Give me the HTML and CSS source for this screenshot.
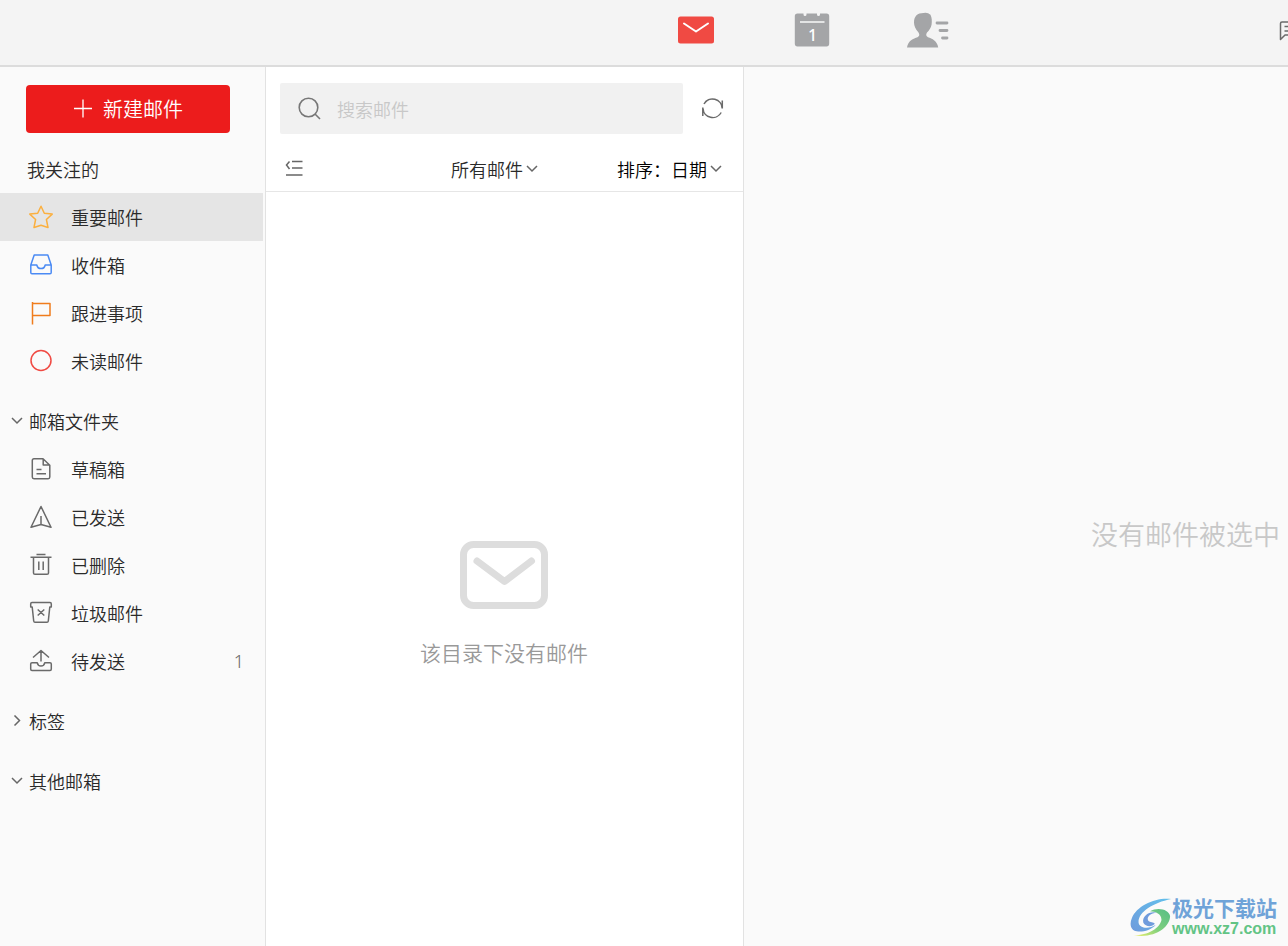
FILE: index.html
```html
<!DOCTYPE html>
<html lang="zh-CN">
<head>
<meta charset="utf-8">
<meta name="viewport" content="width=device-width, initial-scale=1">
<title>邮箱</title>
<link rel="stylesheet" href="styles.css">
</head>
<body>
<header class="topbar">
  <nav class="tabs" aria-label="应用">
    <button class="tab" type="button" aria-label="邮件">
      <svg width="36" height="36" viewBox="0 0 36 36"><rect y="4.500" width="36" height="27" rx="2.500" fill="#f04a43"/><path d="M6 11.500 18 19.500 30 11.500" fill="none" stroke="#fff" stroke-width="2" stroke-linecap="round" stroke-linejoin="round"/></svg>
    </button>
    <button class="tab" type="button" aria-label="日历">
      <svg width="36" height="36" viewBox="0 0 36 36"><path d="M3.500 1.500H9.500V2.500A1.500 1.500 0 0 0 12.500 2.500V1.500H23V2.500A1.500 1.500 0 0 0 26 2.500V1.500H32.500Q35.200 1.500 35.200 4.200V31.500Q35.200 34.400 32.500 34.400H3.500Q.8 34.400 .8 31.500V4.200Q.8 1.500 3.500 1.500Z" fill="#a4a5a7"/><path d="M6 10H30.500" stroke="#f4f4f4" stroke-width="1.600"/><text class="tab-day" x="18.500" y="29" text-anchor="middle">1</text></svg>
    </button>
    <button class="tab" type="button" aria-label="通讯录">
      <svg width="42" height="36" viewBox="0 0 42 36"><path d="M0 35.500C1 28.500 6.500 26.500 10.500 25.200Q13.500 23.500 11.500 20.500C8.500 17 7 14 7 10.500C7 4 10.500 1 16.500 1Q20.500 0 23.500 2.800C25 6 25 9 24.600 12.500C24 16 22 18.500 20 20.500Q18 23.500 21 25.200C25 26.500 30.500 29 31.200 35.500Z" fill="#a4a5a7"/><g stroke="#a4a5a7" stroke-width="2.800" stroke-linecap="round"><path d="M30 11H40M33 18.500H40M35.500 26H40"/></g></svg>
    </button>
  </nav>
  <button class="feedback" type="button" aria-label="反馈">
    <svg width="22" height="22" viewBox="0 0 22 22" fill="none" stroke="#6a6a6a" stroke-width="1.500" stroke-linejoin="round"><path d="M1.500 20.500V4.500Q1.500 3 3 3H19Q20.500 3 20.500 4.500V16H6Z"/><path d="M5.500 7.500H16M5.500 12H13"/></svg>
  </button>
</header>

<div class="workspace">
  <aside class="sidebar">
    <button class="compose" type="button">
      <svg width="20" height="20" viewBox="0 0 20 20"><path d="M1 9.500H19M10 .5V18.500" stroke="#fff" stroke-width="1.300"/></svg>
      新建邮件
    </button>
    <h2 class="group group-plain">我关注的</h2>
    <ul class="folders">
      <li><a class="folder folder-active" href="#starred"><svg class="icon icon-star" viewBox="0 0 24 24"><path d="M12 1.200 15.300 8.200 23.200 9.100 17.400 14.500 19 22.500 12 20.200 5 22.500 6.600 14.500 .8 9.100 8.700 8.200Z"/></svg>重要邮件</a></li>
      <li><a class="folder" href="#inbox"><svg class="icon icon-inbox" viewBox="0 0 24 24"><path d="M5.200 2H18.800L22.200 12V19.500Q22.200 20.800 21 20.800H3Q1.800 20.800 1.800 19.500V12ZM1.800 12H7.800Q8.500 15.600 12 15.600T16.200 12H22.200"/></svg>收件箱</a></li>
      <li><a class="folder" href="#todo"><svg class="icon icon-flag" viewBox="0 0 24 24"><path d="M3.500 1V23.500M3.500 2.500H21V14.500H3.500"/></svg>跟进事项</a></li>
      <li><a class="folder" href="#unread"><svg class="icon icon-unread" viewBox="0 0 24 24"><circle cx="12" cy="11.500" r="10"/></svg>未读邮件</a></li>
    </ul>
    <h2 class="group"><button class="toggle" type="button" aria-expanded="true"><svg class="chevron" viewBox="0 0 12 12"><path d="M1 3 6 8 11 3"/></svg>邮箱文件夹</button></h2>
    <ul class="folders">
      <li><a class="folder" href="#drafts"><svg class="icon" viewBox="0 0 24 24"><path d="M14 1.800H5Q3.300 1.800 3.300 3.500V20Q3.300 21.700 5 21.700H19.200Q20.800 21.700 20.800 20V8.200ZM14.200 2V8H20.600M7.500 12.500H12.500M7.500 16.700H17"/></svg>草稿箱</a></li>
      <li><a class="folder" href="#sent"><svg class="icon" viewBox="0 0 24 24"><path d="M12 1.500 22 22.300 12 19.500 2 22.300ZM12 11V19.500"/></svg>已发送</a></li>
      <li><a class="folder" href="#trash"><svg class="icon" viewBox="0 0 24 24"><path d="M7.500 1.500H16.500M1.500 4.300H22.500M4.500 4.300V20Q4.500 21.300 6 21.300H18Q19.500 21.300 19.500 20V4.300M9.800 8.500V17M14.200 8.500V17"/></svg>已删除</a></li>
      <li><a class="folder" href="#spam"><svg class="icon" viewBox="0 0 24 24"><path d="M3 1.500H21Q22.300 1.500 22.300 3V6H20.800L19.300 20Q19.100 21.300 18 21.300H6Q4.900 21.300 4.700 20L3.200 6H1.700V3Q1.700 1.500 3 1.500ZM8.700 8.500 15.300 14.500M15.300 8.500 8.700 14.500"/></svg>垃圾邮件</a></li>
      <li><a class="folder" href="#outbox"><svg class="icon" viewBox="0 0 24 24"><path d="M4 8.500 12 1.500 20 8.500M12 1.500V12.500M3 13.700H8.200Q8.800 17 12 17T15.800 13.700H21Q22.300 13.700 22.300 15V20Q22.300 21.500 21 21.500H3Q1.700 21.500 1.700 20V15Q1.700 13.700 3 13.700Z"/></svg>待发送<span class="count">1</span></a></li>
    </ul>
    <h2 class="group"><button class="toggle" type="button" aria-expanded="false"><svg class="chevron" viewBox="0 0 12 12"><path d="M3.500 .5 8.500 5.500 3.500 10.500"/></svg>标签</button></h2>
    <h2 class="group"><button class="toggle" type="button" aria-expanded="true"><svg class="chevron" viewBox="0 0 12 12"><path d="M1 3 6 8 11 3"/></svg>其他邮箱</button></h2>
  </aside>

  <main class="list">
    <div class="search-row">
      <label class="search">
        <svg width="24" height="24" viewBox="0 0 24 24" fill="none" stroke="#777" stroke-width="1.600"><circle cx="10.500" cy="10.500" r="9.300"/><path d="M17 17 22 22"/></svg>
        <input class="search-input" type="search" placeholder="搜索邮件" aria-label="搜索邮件">
      </label>
      <button class="refresh" type="button" aria-label="刷新">
        <svg width="24" height="24" viewBox="0 0 24 24" fill="none" stroke="#6a6a6a" stroke-width="1.500"><path d="M3 7A9.700 9.700 0 0 1 21.200 11.500M21.300 3.500V11.500M20.200 15.500A9.700 9.700 0 0 1 2 11.500M1.800 19V10.500"/></svg>
      </button>
    </div>
    <div class="toolbar">
      <button class="collapse" type="button" aria-label="收起">
        <svg width="20" height="20" viewBox="0 0 20 20" fill="none" stroke="#666" stroke-width="1.500"><path d="M8 2.500H18.500M8 9H18.500M2 16H18.500M5.500 2.500 2.500 6 5.500 10"/></svg>
      </button>
      <label class="picker picker-filter">
        <select class="picker-select" aria-label="筛选"><option>所有邮件</option></select>
        <svg class="chevron" viewBox="0 0 12 12"><path d="M1 3 6 8 11 3"/></svg>
      </label>
      <label class="picker picker-sort">排序：
        <select class="picker-select"><option>日期</option></select>
        <svg class="chevron" viewBox="0 0 12 12"><path d="M1 3 6 8 11 3"/></svg>
      </label>
    </div>
    <div class="empty">
      <svg width="88" height="68" viewBox="0 0 88 68" fill="none" stroke="#ddd"><rect x="3.500" y="3.500" width="81" height="61" rx="10" stroke-width="7"/><path d="M17 20 44.500 40.500 71.500 20" stroke-width="7" stroke-linecap="round" stroke-linejoin="round"/></svg>
      <p class="empty-text">该目录下没有邮件</p>
    </div>
  </main>

  <section class="reader">
    <p class="reader-text">没有邮件被选中</p>
  </section>
</div>

<div class="watermark">
  <svg width="42" height="42" viewBox="0 0 44 42">
    <defs>
      <linearGradient id="wave" x1="1" y1="0" x2="0" y2="1"><stop offset="0" stop-color="#62c0ec"/><stop offset="1" stop-color="#6f9bdc"/></linearGradient>
      <linearGradient id="leaf" x1="1" y1="0" x2="0" y2="1"><stop offset="0" stop-color="#55bd86"/><stop offset=".55" stop-color="#80d07e"/><stop offset="1" stop-color="#eef06c"/></linearGradient>
    </defs>
    <path d="M43 1C27-1 7 8 2 21C-1 28 1 34 7 35C13 36 22 34 27 28C20 33 10 32 9 26C8 15 24 5 43 1Z" fill="url(#wave)"/>
    <path d="M14 26C12 19 21 13 28 15.500C22 15.500 17 20 19 23.500C21 26 25 25 26 27C23 31 16 30 14 26Z" fill="#6f9bdc"/>
    <path d="M21 14C29 9 41 12 42 19C42 31 25 43 4 39C19 39 31 32 33 23C33 17 27 14 21 14Z" fill="url(#leaf)"/>
  </svg>
  <div class="watermark-text">
    <span class="watermark-name">极光下载站</span>
    <span class="watermark-url">www.xz7.com</span>
  </div>
</div>
</body>
</html>
```
FILE: styles.css
```css
* {
  box-sizing: border-box;
}

body {
  margin: 0;
  min-height: 100vh;
  display: flex;
  flex-direction: column;
  position: relative;
  overflow-x: hidden;
  background: #fafafa;
  color: #2a2a2a;
  font-family: "Noto Sans CJK SC", "Liberation Sans", sans-serif;
  font-size: 18px;
  font-weight: 350;
  line-height: 24px;
}

button,
input,
select {
  margin: 0;
  padding: 0;
  border: 0;
  background: none;
  color: inherit;
  font: inherit;
}

p,
h2,
ul {
  margin: 0;
  padding: 0;
}

svg {
  display: block;
  flex: none;
}

/* Top bar */
.topbar {
  display: flex;
  justify-content: space-between;
  height: 67px;
  padding: 0 0 6px 638px;
  overflow: hidden;
  background: #f4f4f4;
  border-bottom: 2px solid #dcdcdc;
}

.tabs {
  display: flex;
}

.tab {
  display: grid;
  place-items: center;
  width: 116px;
}

.tab-day {
  fill: #fff;
  font-family: "Noto Sans", sans-serif;
  font-size: 16px;
  font-weight: 500;
}

.feedback {
  margin-right: -13px;
}

.workspace {
  flex: 1;
  display: flex;
}

/* Sidebar */
.sidebar {
  flex: none;
  width: 266px;
  padding: 18px 2px 0 0;
  border-right: 1px solid #e2e2e2;
}

.compose {
  display: flex;
  align-items: center;
  justify-content: center;
  gap: 10px;
  width: 204px;
  height: 48px;
  margin-left: 26px;
  border-radius: 4px;
  background: #ec1c1c;
  color: #fff;
  font-size: 20px;
}

.group {
  display: flex;
  align-items: center;
  height: 60px;
  padding: 12px 0 0 11px;
  font-size: 18px;
  font-weight: 350;
}

.group-plain {
  padding-left: 27px;
}

.toggle {
  display: flex;
  align-items: center;
  gap: 6px;
}

.chevron {
  width: 12px;
  height: 12px;
  fill: none;
  stroke: #666;
  stroke-width: 1.500;
}

.folders {
  list-style: none;
}

.folder {
  display: flex;
  align-items: center;
  gap: 18px;
  height: 48px;
  padding: 0 19px 0 29px;
  color: inherit;
  text-decoration: none;
}

.folder-active {
  background: #e5e5e5;
}

.icon {
  width: 24px;
  height: 24px;
  fill: none;
  stroke: #6a6a6a;
  stroke-width: 1.500;
  stroke-linejoin: round;
}

.icon-star {
  stroke: #fbb040;
}

.icon-inbox {
  stroke: #4a8af4;
}

.icon-flag {
  stroke: #f07c1c;
}

.icon-unread {
  stroke: #f04a43;
}

.count {
  margin-left: auto;
  color: #666;
  font-family: "Noto Sans", sans-serif;
}

/* Mail list */
.list {
  flex: none;
  display: flex;
  flex-direction: column;
  width: 478px;
  background: #fff;
  border-right: 1px solid #e2e2e2;
}

.search-row {
  display: flex;
  align-items: center;
  gap: 18px;
  padding: 16px 18px 0 14px;
}

.search {
  flex: 1;
  display: flex;
  align-items: center;
  gap: 15px;
  height: 51px;
  padding: 0 18px;
  border-radius: 2px;
  background: #f1f1f1;
}

.search-input {
  flex: 1;
  min-width: 0;
  outline: 0;
}

.search-input::placeholder {
  color: #c8c8c8;
}

.toolbar {
  display: flex;
  align-items: center;
  height: 58px;
  padding: 12px 21px 0 18px;
  border-bottom: 1px solid #e6e6e6;
}

.picker {
  display: flex;
  align-items: center;
}

.picker .chevron {
  margin-left: 3px;
}

.picker-filter {
  margin: 0 79px 0 auto;
}

.picker-sort {
  color: #000;
}

.picker-select {
  appearance: none;
}

.empty {
  flex: 1;
  display: flex;
  flex-direction: column;
  align-items: center;
  justify-content: center;
  gap: 31px;
  padding: 67px 1px 0 0;
}

.empty-text {
  color: #999;
  font-size: 21px;
}

/* Reading pane */
.reader {
  flex: 1;
  display: flex;
  align-items: center;
  justify-content: flex-end;
  padding: 54px 8px 0;
}

.reader-text {
  color: #c8c8c8;
  font-size: 27px;
}

/* Site mark over the bottom corner */
.watermark {
  position: absolute;
  right: 11px;
  bottom: 6px;
  display: flex;
  align-items: center;
}

.watermark-text {
  display: flex;
  flex-direction: column;
  line-height: 22px;
}

.watermark-name {
  color: #6fa3d8;
  font-size: 21px;
  font-weight: 700;
}

.watermark-url {
  color: #62c485;
  font-family: "Liberation Sans", sans-serif;
  font-size: 16px;
  font-weight: 700;
}
```
